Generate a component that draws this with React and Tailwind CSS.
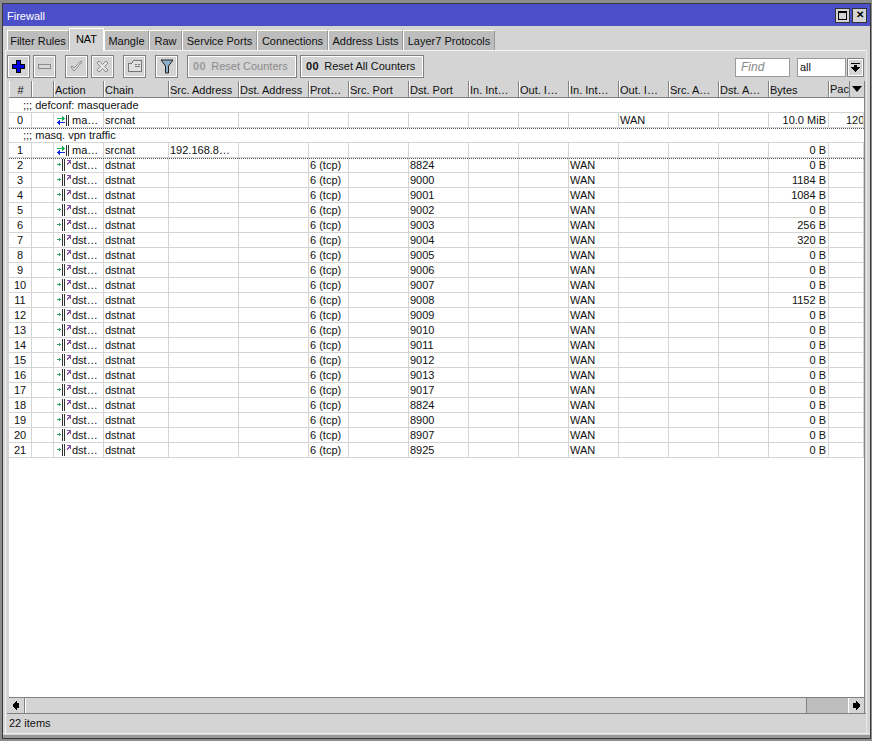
import React from "react";

const TABS = [
  ["Filter Rules", "w-[62px]"],
  ["NAT", "w-[35px]"],
  ["Mangle", "w-[45px]"],
  ["Raw", "w-[33px]"],
  ["Service Ports", "w-[75px]"],
  ["Connections", "w-[71px]"],
  ["Address Lists", "w-[75px]"],
  ["Layer7 Protocols", "w-[92px]"],
];
const COLS = "grid grid-cols-[23px_22px_50px_65px_70px_70px_40px_60px_60px_50px_50px_50px_50px_50px_50px_60px_35px]";
const HEADERS = ["#", "", "Action", "Chain", "Src. Address", "Dst. Address", "Prot…", "Src. Port", "Dst. Port", "In. Int…", "Out. I…", "In. Int…", "Out. I…", "Src. A…", "Dst. A…", "Bytes"];

const DST = [
  [2, "8824", "0 B"], [3, "9000", "1184 B"], [4, "9001", "1084 B"], [5, "9002", "0 B"],
  [6, "9003", "256 B"], [7, "9004", "320 B"], [8, "9005", "0 B"], [9, "9006", "0 B"],
  [10, "9007", "0 B"], [11, "9008", "1152 B"], [12, "9009", "0 B"], [13, "9010", "0 B"],
  [14, "9011", "0 B"], [15, "9012", "0 B"], [16, "9013", "0 B"], [17, "9017", "0 B"],
  [18, "8824", "0 B"], [19, "8900", "0 B"], [20, "8907", "0 B"], [21, "8925", "0 B"],
];

const bevel = "border border-[#808080] shadow-[inset_1px_1px_0_#fff,inset_-1px_-1px_0_#fff]";

const MasqIcon = () => (
  <svg width="12" height="11" viewBox="0 0 12 11" shapeRendering="crispEdges" className="shrink-0">
    <path d="M0 3h5V1h1v1h1v1h1v1H7v1H6v1H5V4H0z" fill="#12b050" />
    <path d="M8 7H3V5H2v1H1v1H0v1h1v1h1v1h1V8h5z" fill="#1226e8" />
    <rect x="9" y="0" width="1" height="11" fill="#333" />
    <rect x="11" y="0" width="1" height="11" fill="#333" />
  </svg>
);

const DstIcon = () => (
  <svg width="14" height="12" viewBox="0 0 14 12" shapeRendering="crispEdges" className="shrink-0">
    <path d="M0 5h2V4h1v1h1v1H3v1H2V6H0z" fill="#35a468" />
    <rect x="5" y="0" width="1" height="12" fill="#333" />
    <rect x="7" y="0" width="1" height="12" fill="#333" />
    <path d="M10 1h4v4h-1V4h-1v1h-1v1h-1V4h1V3h1V2h-2z" fill="#8a4fa8" />
  </svg>
);

const Cell = ({ children, right, className = "" }) => (
  <div className={`h-[15px] border-r border-b border-[#d4d4d4] px-[1px] leading-[15px] whitespace-nowrap overflow-hidden ${right ? "text-right pr-[2px]" : ""} ${className}`}>
    {children}
  </div>
);

const Row = ({ num, icon, action, chain, src = "", proto = "", dport = "", inIf = "", outIf = "", bytes, packets = "", dotted }) => (
  <div className={`${COLS} ${dotted ? "border-b border-dotted border-[#555] -mb-px relative" : ""}`}>
    <Cell className="text-center">{num}</Cell>
    <Cell />
    <Cell className="flex items-center pl-[3px]"><span className="w-[15px] shrink-0 flex">{icon}</span><span>{action}</span></Cell>
    <Cell>{chain}</Cell>
    <Cell>{src}</Cell>
    <Cell />
    <Cell>{proto}</Cell>
    <Cell />
    <Cell>{dport}</Cell>
    <Cell />
    <Cell />
    <Cell>{inIf}</Cell>
    <Cell>{outIf}</Cell>
    <Cell />
    <Cell />
    <Cell right>{bytes}</Cell>
    <Cell className="pl-[17px] pr-0">{packets}</Cell>
  </div>
);

const Comment = ({ children }) => (
  <div className="h-[15px] pl-[14px] leading-[15px] whitespace-nowrap border-b border-[#d4d4d4]">{children}</div>
);

const ToolButton = ({ children, className = "" }) => (
  <button className={`w-[23px] h-[23px] bg-[#d4d4d4] flex items-center justify-center ${bevel} ${className}`}>{children}</button>
);

const Arrow = ({ dir }) => (
  <svg width="7" height="9" viewBox="0 0 7 9" shapeRendering="crispEdges">
    {dir === "left"
      ? <path d="M3 0h1v2h2v5H4v2H3V8H2V7H1V6H0V3h1V2h1V1h1z" fill="#000" />
      : <path d="M3 0h1v1h1v1h1v1h1v3H6v1H5v1H4v1H3V7H0V2h3z" fill="#000" />}
  </svg>
);

export default function App() {
  return (
    <div className="w-[872px] h-[741px] bg-[#8c8c8c] pt-[3px] pl-[2px] pr-[1px] pb-[2px] overflow-hidden">
      <div className="h-full flex flex-col bg-[#d4d4d4] text-[11px] text-[#111] border border-[#3a3a3a] font-['Liberation_Sans',sans-serif] overflow-hidden">
        {/* Title bar */}
        <div className="h-[22px] bg-[#4c50c8] flex items-center justify-between pl-[4px] pr-[3px] shrink-0">
          <span className="text-white text-[11px] pt-[3px]">Firewall</span>
          <div className="flex gap-[2px]">
            <div className="w-[15px] h-[15px] bg-[#d4d4d4] border border-[#333] flex items-center justify-center">
              <div className="w-[9px] h-[9px] border border-black border-t-2" />
            </div>
            <div className="w-[15px] h-[15px] bg-[#d4d4d4] border border-[#333] flex items-center justify-center text-[10px] font-bold leading-none text-black">✕</div>
          </div>
        </div>

        <div className="flex-1 flex flex-col pl-[2px] pr-[3px] min-h-0">
          {/* Tabs */}
          <div className="h-[20px] mt-[4px] flex items-end shrink-0 pl-[2px]">
            {TABS.map(([t, w]) => (
              <div
                key={t}
                className={t === "NAT"
                  ? `${w} h-[23px] pb-[2px] bg-[#d4d4d4] border-t border-x border-white flex items-center justify-center text-[#000] z-10 -mb-px`
                  : `${w} h-[20px] pt-px bg-[#bdbdbd] border-t border-l border-white border-r border-r-[#999] flex items-center justify-center whitespace-nowrap`}
              >
                {t}
              </div>
            ))}
          </div>

          {/* Panel */}
          <div className="flex-1 flex flex-col min-h-0 border-t border-x border-[#f4f4f4] border-r-[#e8e8e8]">
            {/* Toolbar */}
            <div className="h-[30px] flex items-center pl-[1px] pr-[2px] shrink-0">
              <ToolButton>
                <svg width="13" height="13" viewBox="0 0 13 13" shapeRendering="crispEdges">
                  <path d="M4.500.500h4v4h4v4h-4v4h-4v-4h-4v-4h4z" fill="#0000e0" stroke="#000" />
                </svg>
              </ToolButton>
              <ToolButton className="ml-[3px]">
                <svg width="13" height="5" viewBox="0 0 13 5" shapeRendering="crispEdges">
                  <rect x="0.500" y="0.500" width="12" height="4" fill="#d8d8d8" stroke="#8a8a8a" />
                </svg>
              </ToolButton>
              <ToolButton className="ml-[9px]">
                <svg width="13" height="13" viewBox="0 0 13 13">
                  <path d="M1 7l3 4 8-9-1-1-7 7-2-2z" fill="#e4e4e4" stroke="#8a8a8a" />
                </svg>
              </ToolButton>
              <ToolButton className="ml-[3px]">
                <svg width="13" height="13" viewBox="0 0 13 13">
                  <path d="M1 3l2-2 3.500 3.500L10 1l2 2-3.500 3.500L12 10l-2 2-3.500-3.500L3 12l-2-2 3.500-3.500z" fill="#e4e4e4" stroke="#8a8a8a" />
                </svg>
              </ToolButton>
              <ToolButton className="ml-[9px]">
                <svg width="14" height="12" viewBox="0 0 14 12" shapeRendering="crispEdges">
                  <path d="M.500 3.500h3l2-3h8v11H.500z" fill="#e0e0e0" stroke="#777" />
                  <path d="M7 4h2M10 4h2M7 6h5" stroke="#777" />
                </svg>
              </ToolButton>
              <ToolButton className="ml-[9px]">
                <svg width="14" height="15" viewBox="0 0 14 15">
                  <path d="M1 1h12L8.500 7v7h-3V7z" fill="#8fb0cc" stroke="#222" />
                </svg>
              </ToolButton>
              <button className={`ml-[9px] w-[110px] h-[23px] flex items-center pl-[5px] text-[#8a8a8a] ${bevel}`}>
                <span className="font-bold mr-[5px] text-[#9a9a9a] tracking-[0.5px]">00</span>Reset Counters
              </button>
              <button className={`ml-[3px] w-[124px] h-[23px] flex items-center pl-[5px] ${bevel}`}>
                <span className="font-bold mr-[5px] tracking-[0.5px]">00</span>Reset All Counters
              </button>
              <div className="flex-1" />
              <div className="w-[55px] h-[19px] mt-[3px] bg-white border border-[#9a9a9a] pl-[5px] leading-[17px] italic text-[#8a8a8a] text-[12px]">Find</div>
              <div className="ml-[7px] w-[49px] h-[19px] mt-[3px] bg-white border border-[#9a9a9a] pl-[2px] leading-[17px]">all</div>
              <button className={`ml-[1px] w-[17px] h-[19px] mt-[3px] flex items-center justify-center ${bevel}`}>
                <svg width="9" height="9" viewBox="0 0 9 9" shapeRendering="crispEdges">
                  <path d="M0 0h9v1H0zM3 2h3v2h3v1H8v1H7v1H6v1H5v1H4V8H3V7H2V6H1V5H0V4h3z" fill="#000" />
                </svg>
              </button>
            </div>

            {/* Table */}
            <div className="flex-1 flex flex-col min-h-0 bg-white ml-[3px] mr-px border-r border-[#808080]">
              <div className={`${COLS} h-[17px] bg-[#d4d4d4] border-b border-[#808080] relative shrink-0`}>
                {HEADERS.map((h, i) => (
                  <div key={i} className={`border-r border-[#808080] border-l border-l-white pt-px leading-[16px] whitespace-nowrap overflow-hidden ${i === 0 ? "text-center" : ""}`}>{h}</div>
                ))}
                <div className="border-l border-l-white flex items-center overflow-hidden">
                  <span className="w-[20px] shrink-0 border-r border-[#808080] leading-[16px]">Pac</span>
                  <svg width="10" height="6" viewBox="0 0 10 6" className="ml-[2px] shrink-0"><path d="M0 0h10L5 6z" fill="#000" /></svg>
                </div>
              </div>

              <div className="flex-1 min-h-0 overflow-hidden">
                <Comment>;;; defconf: masquerade</Comment>
                <Row num={0} icon={<MasqIcon />} action="ma…" chain="srcnat" outIf="WAN" bytes="10.0 MiB" packets="120" dotted />
                <Comment>;;; masq. vpn traffic</Comment>
                <Row num={1} icon={<MasqIcon />} action="ma…" chain="srcnat" src="192.168.8…" bytes="0 B" dotted />
                {DST.map(([n, port, bytes]) => (
                  <Row key={n} num={n} icon={<DstIcon />} action="dst…" chain="dstnat" proto="6 (tcp)" dport={port} inIf="WAN" bytes={bytes} />
                ))}
              </div>

              {/* Horizontal scrollbar */}
              <div className="h-[16px] border-t border-[#808080] bg-[#d4d4d4] flex shrink-0">
                <div className="w-[16px] flex items-center justify-center border-r border-[#808080]"><Arrow dir="left" /></div>
                <div className="flex-1 border-l border-white" />
                <div className="w-[42px] bg-[#bdbdbd] border-l border-[#808080]" />
                <div className="w-[16px] flex items-center justify-center border-l border-white"><Arrow dir="right" /></div>
              </div>
            </div>

            {/* Status bar */}
            <div className="h-[20px] border-t border-[#808080] ml-px pl-[2px] leading-[19px] shrink-0">22 items</div>
          </div>
        </div>

        {/* Bottom frame */}
        <div className="h-[5px] shrink-0 border-t border-[#f0f0f0] border-b-[3px] border-b-[#9a9a9a]" />
      </div>
    </div>
  );
}
